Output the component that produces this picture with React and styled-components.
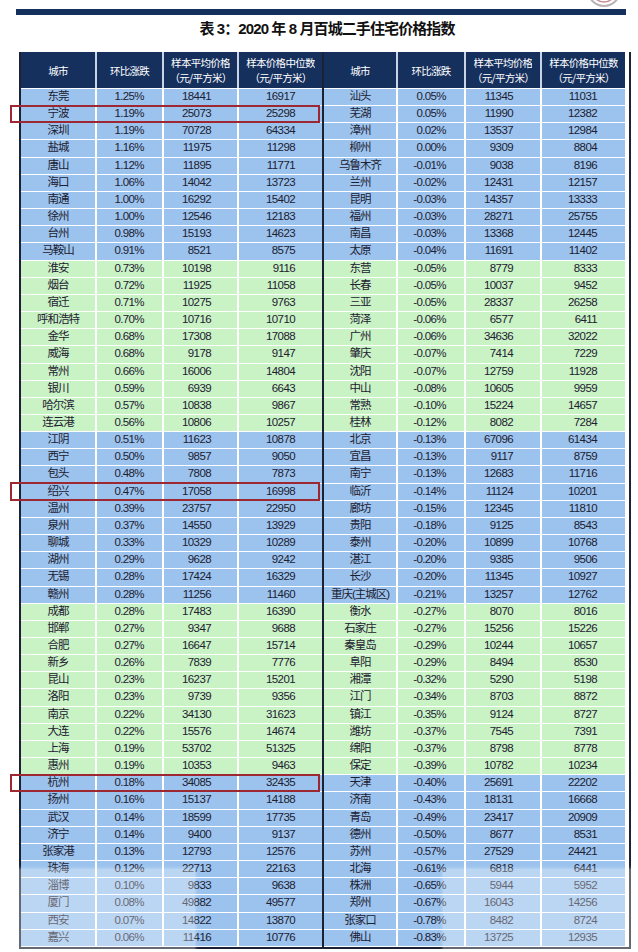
import React from 'react';
import styled, { createGlobalStyle } from 'styled-components';

const GlobalStyle = createGlobalStyle`
  html, body { margin: 0; padding: 0; background: #fff; }
  body { font-family: "Liberation Sans", "Noto Sans CJK SC", sans-serif; }
`;

const NAVY = '#16305e';
const LINE = '#1c2233';
const BLUE = '#9bc3ee';
const GREEN = '#c9f2c5';

const left = [
  ['东莞', '1.25%', '18441', '16917'],
  ['宁波', '1.19%', '25073', '25298', true],
  ['深圳', '1.19%', '70728', '64334'],
  ['盐城', '1.16%', '11975', '11298'],
  ['唐山', '1.12%', '11895', '11771'],
  ['海口', '1.06%', '14042', '13723'],
  ['南通', '1.00%', '16292', '15402'],
  ['徐州', '1.00%', '12546', '12183'],
  ['台州', '0.98%', '15193', '14623'],
  ['马鞍山', '0.91%', '8521', '8575'],
  ['淮安', '0.73%', '10198', '9116'],
  ['烟台', '0.72%', '11925', '11058'],
  ['宿迁', '0.71%', '10275', '9763'],
  ['呼和浩特', '0.70%', '10716', '10710'],
  ['金华', '0.68%', '17308', '17088'],
  ['威海', '0.68%', '9178', '9147'],
  ['常州', '0.66%', '16006', '14804'],
  ['银川', '0.59%', '6939', '6643'],
  ['哈尔滨', '0.57%', '10838', '9867'],
  ['连云港', '0.56%', '10806', '10257'],
  ['江阴', '0.51%', '11623', '10878'],
  ['西宁', '0.50%', '9857', '9050'],
  ['包头', '0.48%', '7808', '7873'],
  ['绍兴', '0.47%', '17058', '16998', true],
  ['温州', '0.39%', '23757', '22950'],
  ['泉州', '0.37%', '14550', '13929'],
  ['聊城', '0.33%', '10329', '10289'],
  ['湖州', '0.29%', '9628', '9242'],
  ['无锡', '0.28%', '17424', '16329'],
  ['赣州', '0.28%', '11256', '11460'],
  ['成都', '0.28%', '17483', '16390'],
  ['邯郸', '0.27%', '9347', '9688'],
  ['合肥', '0.27%', '16647', '15714'],
  ['新乡', '0.26%', '7839', '7776'],
  ['昆山', '0.23%', '16237', '15201'],
  ['洛阳', '0.23%', '9739', '9356'],
  ['南京', '0.22%', '34130', '31623'],
  ['大连', '0.22%', '15576', '14674'],
  ['上海', '0.19%', '53702', '51325'],
  ['惠州', '0.19%', '10353', '9463'],
  ['杭州', '0.18%', '34085', '32435', true],
  ['扬州', '0.16%', '15137', '14188'],
  ['武汉', '0.14%', '18599', '17735'],
  ['济宁', '0.14%', '9400', '9137'],
  ['张家港', '0.13%', '12793', '12576'],
  ['珠海', '0.12%', '22713', '22163'],
  ['淄博', '0.10%', '9833', '9638'],
  ['厦门', '0.08%', '49882', '49577'],
  ['西安', '0.07%', '14822', '13870'],
  ['嘉兴', '0.06%', '11416', '10776'],
];

const right = [
  ['汕头', '0.05%', '11345', '11031'],
  ['芜湖', '0.05%', '11990', '12382'],
  ['漳州', '0.02%', '13537', '12984'],
  ['柳州', '0.00%', '9309', '8804'],
  ['乌鲁木齐', '-0.01%', '9038', '8196'],
  ['兰州', '-0.02%', '12431', '12157'],
  ['昆明', '-0.03%', '14357', '13333'],
  ['福州', '-0.03%', '28271', '25755'],
  ['南昌', '-0.03%', '13368', '12445'],
  ['太原', '-0.04%', '11691', '11402'],
  ['东营', '-0.05%', '8779', '8333'],
  ['长春', '-0.05%', '10037', '9452'],
  ['三亚', '-0.05%', '28337', '26258'],
  ['菏泽', '-0.06%', '6577', '6411'],
  ['广州', '-0.06%', '34636', '32022'],
  ['肇庆', '-0.07%', '7414', '7229'],
  ['沈阳', '-0.07%', '12759', '11928'],
  ['中山', '-0.08%', '10605', '9959'],
  ['常熟', '-0.10%', '15224', '14657'],
  ['桂林', '-0.12%', '8082', '7284'],
  ['北京', '-0.13%', '67096', '61434'],
  ['宜昌', '-0.13%', '9117', '8759'],
  ['南宁', '-0.13%', '12683', '11716'],
  ['临沂', '-0.14%', '11124', '10201'],
  ['廊坊', '-0.15%', '12345', '11810'],
  ['贵阳', '-0.18%', '9125', '8543'],
  ['泰州', '-0.20%', '10899', '10768'],
  ['湛江', '-0.20%', '9385', '9506'],
  ['长沙', '-0.20%', '11345', '10927'],
  ['重庆(主城区)', '-0.21%', '13257', '12762'],
  ['衡水', '-0.27%', '8070', '8016'],
  ['石家庄', '-0.27%', '15256', '15226'],
  ['秦皇岛', '-0.29%', '10244', '10657'],
  ['阜阳', '-0.29%', '8494', '8530'],
  ['湘潭', '-0.32%', '5290', '5198'],
  ['江门', '-0.34%', '8703', '8872'],
  ['镇江', '-0.35%', '9124', '8727'],
  ['潍坊', '-0.37%', '7545', '7391'],
  ['绵阳', '-0.37%', '8798', '8778'],
  ['保定', '-0.39%', '10782', '10234'],
  ['天津', '-0.40%', '25691', '22202'],
  ['济南', '-0.43%', '18131', '16668'],
  ['青岛', '-0.49%', '23417', '20909'],
  ['德州', '-0.50%', '8677', '8531'],
  ['苏州', '-0.57%', '27529', '24421'],
  ['北海', '-0.61%', '6818', '6441'],
  ['株洲', '-0.65%', '5944', '5952'],
  ['郑州', '-0.67%', '16043', '14256'],
  ['张家口', '-0.78%', '8482', '8724'],
  ['佛山', '-0.83%', '13725', '12935'],
];

const sides = {
  left: { cols: '74px 65px 73px 83px', pad: [18, 26, 27] },
  right: { cols: '72px 66px 74px 83px', pad: [18, 27, 28] },
};

const Page = styled.div`
  position: relative;
  width: 638px;
  height: 952px;
  padding-top: 9px;
  box-sizing: border-box;
  overflow: hidden;
  background: #fff;
`;

const TopBar = styled.div`
  height: 6px;
  margin: 0 12px 0 16px;
  background: ${NAVY};
`;

const Seal = styled.svg`
  position: absolute;
  top: -14px;
  right: 16px;
`;

const Title = styled.h1`
  margin: 6px 0 15px 16px;
  text-align: center;
  font-size: 15px;
  line-height: 16px;
  font-weight: bold;
  letter-spacing: -0.9px;
  color: #111;
`;

const Frame = styled.div`
  display: flex;
  width: 608px;
  margin-left: 19px;
  border-left: 2px solid ${LINE};
  border-right: 2px solid ${LINE};
  border-bottom: 2px solid ${LINE};
`;

const Half = styled.div`
  width: 301px;
  display: flex;
  flex-direction: column;
`;

const Divider = styled.div`
  width: 2px;
  background: ${LINE};
`;

const HeadRow = styled.div`
  display: grid;
  grid-template-columns: ${(p) => p.$cols};
  column-gap: 2px;
  height: 37px;
  box-sizing: border-box;
  border-bottom: 1.5px solid #fff;
  background: #c9d3e4;
`;

const HeadCell = styled.div`
  display: flex;
  flex-direction: column;
  align-items: center;
  justify-content: center;
  background: ${NAVY};
  color: #fff;
  font-family: "Noto Sans CJK SC", sans-serif;
  font-size: 10.5px;
  letter-spacing: -0.7px;
`;

const HeadLine = styled.span`
  display: block;
  height: 15px;
  line-height: 15px;
  overflow: hidden;
`;

const Row = styled.div`
  position: relative;
  display: grid;
  grid-template-columns: ${(p) => p.$cols};
  column-gap: 2px;
  height: 17.16px;
  box-sizing: border-box;
  border-bottom: 1.5px solid #fff;
  background: #fff;

  &::after {
    content: '';
    display: ${(p) => (p.$hl ? 'block' : 'none')};
    position: absolute;
    left: -11px;
    right: 2px;
    top: -1.5px;
    bottom: -1px;
    border: 2.5px solid #9d2831;
    pointer-events: none;
    z-index: 2;
  }
`;

const Cell = styled.div`
  background: ${(p) => (p.$green ? GREEN : BLUE)};
  color: #1d2030;
  font-size: 11.5px;
  line-height: 15.6px;
  white-space: nowrap;
  text-align: ${(p) => (p.$pr ? 'right' : 'center')};
  padding-right: ${(p) => p.$pr || 0}px;
  letter-spacing: ${(p) => (p.$pr ? '-0.6px' : '-1px')};
`;

const Fade = styled.div`
  position: absolute;
  top: 869px;
  height: 80px;
  left: ${(p) => p.$x}px;
  width: ${(p) => p.$w}px;
  background: rgba(255, 255, 255, 0.32);
  box-shadow: 0 0 3px 1px rgba(255, 255, 255, 0.3);
  z-index: 3;
`;

function Table({ side, rows }) {
  const { cols, pad } = sides[side];
  return (
    <Half>
      <HeadRow $cols={cols}>
        <HeadCell>城市</HeadCell>
        <HeadCell>环比涨跌</HeadCell>
        <HeadCell>
          <HeadLine>样本平均价格</HeadLine>
          <HeadLine>（元/平方米）</HeadLine>
        </HeadCell>
        <HeadCell>
          <HeadLine>样本价格中位数</HeadLine>
          <HeadLine>（元/平方米）</HeadLine>
        </HeadCell>
      </HeadRow>
      {rows.map(([city, pct, avg, mid, hl], i) => {
        const green = Math.floor(i / 10) % 2 === 1;
        return (
          <Row key={city} $cols={cols} $hl={hl}>
            <Cell $green={green}>{city}</Cell>
            <Cell $green={green} $pr={pad[0]}>{pct}</Cell>
            <Cell $green={green} $pr={pad[1]}>{avg}</Cell>
            <Cell $green={green} $pr={pad[2]}>{mid}</Cell>
          </Row>
        );
      })}
    </Half>
  );
}

export default function App() {
  return (
    <Page>
      <GlobalStyle />
      <Seal width="36" height="22" viewBox="0 0 36 22">
        <circle cx="18" cy="4" r="16" fill="none" stroke="#b9b2b4" strokeWidth="2" />
        <circle cx="18" cy="4" r="12" fill="none" stroke="#c98a8f" strokeWidth="1.5" />
      </Seal>
      <TopBar />
      <Title>表 3：2020 年 8 月百城二手住宅价格指数</Title>
      <Frame>
        <Table side="left" rows={left} />
        <Divider />
        <Table side="right" rows={right} />
      </Frame>
      <Fade $x={3} $w={192} />
      <Fade $x={443} $w={193} />
    </Page>
  );
}
